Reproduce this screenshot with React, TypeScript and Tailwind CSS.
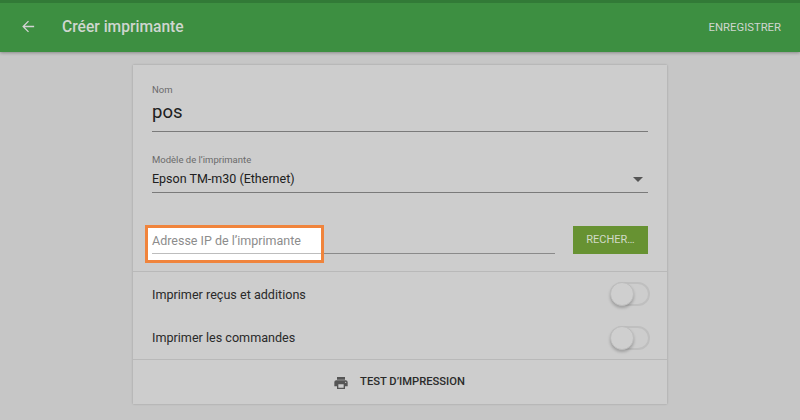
import React from "react";

function Toggle() {
  return (
    <div className="relative w-[40px] h-[24px] -mr-[2px]">
      <div className="h-[24px] w-[40px] rounded-full border-2 border-[#bfbfbf]" />
      <div className="absolute left-0 top-0 h-[24px] w-[24px] rounded-full bg-[#cfcfcf] border border-[#bdbdbd] shadow-[0_2px_3px_rgba(0,0,0,0.22)]" />
    </div>
  );
}

export default function App() {
  return (
    <div className="w-[800px] h-[420px] overflow-hidden bg-[#c6c6c6] flex flex-col font-['Roboto',sans-serif]">
      <header className="h-[52px] shrink-0 bg-[#3d8f41] border-t-[3px] border-[#327a37] shadow-[0_1px_3px_rgba(0,0,0,0.3)] flex items-center pl-[21px] pr-[19px] text-[#d4d4d4]">
        <svg width="15" height="15" viewBox="0 0 16 16" fill="none" stroke="#d4d4d4" strokeWidth="1.4" className="mr-[26px] -mt-[2px]">
          <path d="M14 8H2.5M8 2.3 2.3 8 8 13.7" />
        </svg>
        <div className="text-[15.6px] font-medium mt-[1px] text-[#cfd6cf]">Créer imprimante</div>
        <div className="ml-auto text-[11.3px] mt-[1px] text-[#d0d6d0]">ENREGISTRER</div>
      </header>

      <main className="flex justify-center pt-[13px]">
        <section className="w-[534px] h-[339px] bg-[#cdcdcd] shadow-[0_0_2px_rgba(0,0,0,0.22)] flex flex-col">
          <div className="px-[19px] pt-[19px] h-[206px] shrink-0">
            <div className="text-[9.5px] leading-[12px] text-[#6b6b6b]">Nom</div>
            <div className="text-[18.5px] leading-[28px] mt-[2px] text-[#202020] h-[34px] border-b border-[#7a7a7a]">pos</div>

            <div className="text-[9.5px] leading-[12px] text-[#6b6b6b] mt-[22px]">Modèle de l’imprimante</div>
            <div className="flex items-center justify-between h-[27px] border-b border-[#7a7a7a] text-[12.5px] text-[#202020]">
              <span>Epson TM-m30 (Ethernet)</span>
              <span className="mr-[5px] w-0 h-0 border-x-[5px] border-x-transparent border-t-[5px] border-t-[#555555]" />
            </div>

            <div className="flex items-start mt-[33px]">
              <div className="relative w-[403px] h-[28px] border-b border-[#8a8a8a]">
                <div className="absolute -left-[7px] -top-[1px] w-[179px] h-[38px] bg-white border-[3px] border-[#f0843c] pl-[4px] pt-[3px] text-[12.5px] leading-[20px] text-[#8c8c8c]">
                  Adresse IP de l’imprimante
                  <div className="h-px bg-[#bdbdbd] w-[169px] mt-[2px]" />
                </div>
              </div>
              <button className="ml-[18px] w-[75px] h-[28px] pt-[1px] bg-[#679232] text-[#d2dac8] text-[11px] flex items-center justify-center">RECHER…</button>
            </div>
          </div>

          <div className="border-t border-[#b9b9b9] px-[19px] flex-1 flex flex-col">
            <div className="h-[44px] flex items-center justify-between">
              <span className="text-[12.6px] mt-[2px] text-[#2a2a2a]">Imprimer reçus et additions</span>
              <Toggle />
            </div>
            <div className="h-[43px] flex items-center justify-between">
              <span className="text-[12.6px] mt-[2px] text-[#2a2a2a]">Imprimer les commandes</span>
              <Toggle />
            </div>
          </div>

          <div className="h-[45px] pt-[1px] shrink-0 border-t border-[#b9b9b9] flex items-center justify-center gap-[11px] text-[11.2px] text-[#2a2a2a] font-medium">
            <svg width="16" height="16" viewBox="0 0 24 24" fill="#555555" className="-ml-[2px]">
              <path d="M19 8H5c-1.66 0-3 1.34-3 3v6h4v4h12v-4h4v-6c0-1.66-1.34-3-3-3zm-3 11H8v-5h8v5zm3-7c-.55 0-1-.45-1-1s.45-1 1-1 1 .45 1 1-.45 1-1 1zm-1-9H6v4h12V3z" />
            </svg>
            <span>TEST D’IMPRESSION</span>
          </div>
        </section>
      </main>
    </div>
  );
}
